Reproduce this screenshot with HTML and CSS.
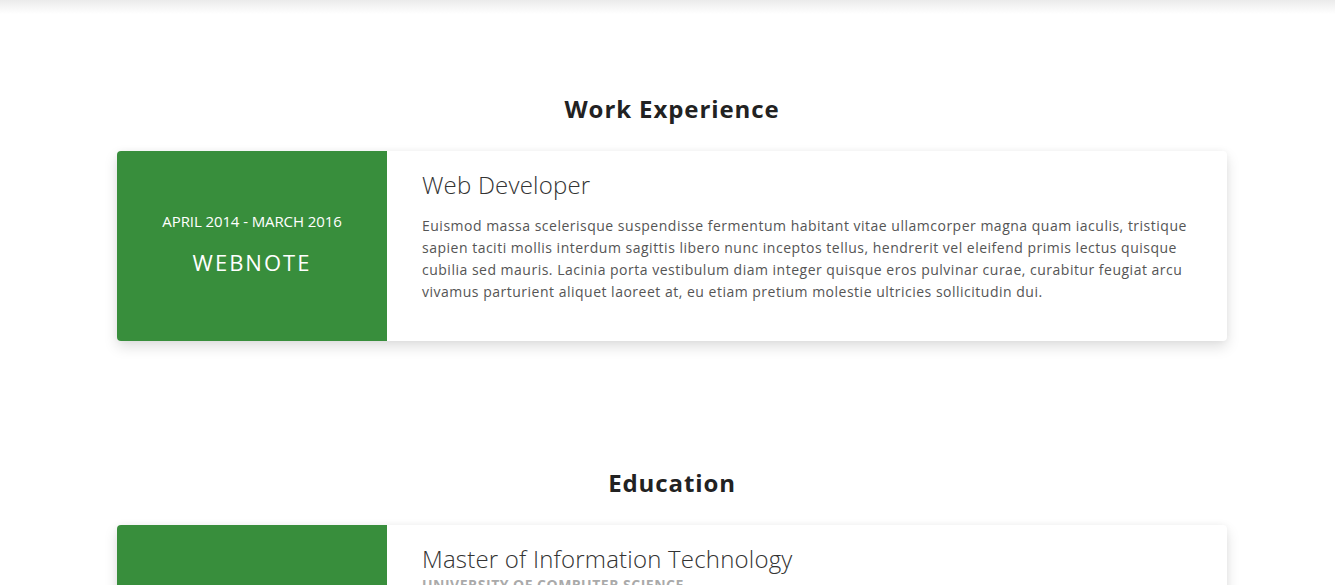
FILE: index.html
```html
<!DOCTYPE html>
<html lang="en">
<head>
<meta charset="utf-8">
<title>Resume</title>
<link rel="stylesheet" href="styles.css">
</head>
<body>
<div class="topfade"></div>
<main>
  <section class="resume-section">
    <h2 class="section-title">Work Experience</h2>
    <div class="card">
      <div class="card-side">
        <div class="card-date">APRIL 2014 - MARCH 2016</div>
        <div class="card-org">WEBNOTE</div>
      </div>
      <div class="card-body">
        <h3 class="card-title">Web Developer</h3>
        <p class="card-text">Euismod massa scelerisque suspendisse fermentum habitant vitae ullamcorper magna quam iaculis, tristique sapien taciti mollis interdum sagittis libero nunc inceptos tellus, hendrerit vel eleifend primis lectus quisque cubilia sed mauris. Lacinia porta vestibulum diam integer quisque eros pulvinar curae, curabitur feugiat arcu vivamus parturient aliquet laoreet at, eu etiam pretium molestie ultricies sollicitudin dui.</p>
      </div>
    </div>
  </section>
  <section class="resume-section">
    <h2 class="section-title">Education</h2>
    <div class="card">
      <div class="card-side">
        <div class="card-date">SEPTEMBER 2012 - APRIL 2014</div>
        <div class="card-org">MASTER</div>
      </div>
      <div class="card-body">
        <h3 class="card-title">Master of Information Technology</h3>
        <div class="card-sub">UNIVERSITY OF COMPUTER SCIENCE</div>
        <p class="card-text">Euismod massa scelerisque suspendisse fermentum habitant vitae ullamcorper magna quam iaculis, tristique sapien taciti mollis interdum sagittis libero nunc inceptos tellus, hendrerit vel eleifend primis lectus quisque cubilia sed mauris. Lacinia porta vestibulum diam integer quisque eros pulvinar curae, curabitur feugiat arcu vivamus parturient aliquet laoreet at, eu etiam pretium molestie ultricies sollicitudin dui.</p>
      </div>
    </div>
  </section>
</main>
</body>
</html>
```
FILE: styles.css
```css
html, body {
  margin: 0;
  padding: 0;
  background: #fff;
}
body {
  font-family: "Open Sans", "DejaVu Sans", sans-serif;
  color: #333;
}
.topfade {
  width: 1335px;
  height: 14px;
  background: linear-gradient(to bottom, #ebebeb, rgba(255,255,255,0));
}
.resume-section {
  padding: 80px 0 47px;
}
.section-title {
  margin: 0 0 27px;
  text-align: center;
  font-size: 24px;
  line-height: 30px;
  font-weight: 700;
  letter-spacing: 0.9px;
  color: #222;
}
.card {
  width: 1110px;
  margin: 0 auto;
  display: flex;
  background: #fff;
  border-radius: 4px;
  overflow: hidden;
  box-shadow: 0 6px 14px rgba(0,0,0,0.13), 0 0 6px rgba(0,0,0,0.04);
}
.card-side {
  flex: 0 0 270px;
  box-sizing: border-box;
  padding-bottom: 6px;
  background: #388e3c;
  color: #fff;
  display: flex;
  flex-direction: column;
  align-items: center;
  justify-content: center;
  text-align: center;
}
.card-date {
  font-size: 15px;
  line-height: 18px;
  font-weight: 500;
  letter-spacing: -0.1px;
  margin-bottom: 19px;
}
.card-org {
  font-size: 22px;
  line-height: 26px;
  font-weight: 400;
  letter-spacing: 2px;
}
.card-body {
  flex: 1;
  padding: 19px 33px 38px 35px;
}
.card-title {
  margin: 0 0 16px;
  font-size: 24px;
  line-height: 29px;
  font-weight: 300;
  letter-spacing: 0.2px;
  color: #333;
}
.card-sub {
  margin-top: -13px;
  margin-bottom: 14px;
  font-size: 14px;
  line-height: 18px;
  font-weight: 700;
  letter-spacing: 0.5px;
  color: #aaa;
}
.card-text {
  margin: 0;
  font-size: 14px;
  line-height: 22px;
  letter-spacing: 0.5px;
  color: #555;
}
```
